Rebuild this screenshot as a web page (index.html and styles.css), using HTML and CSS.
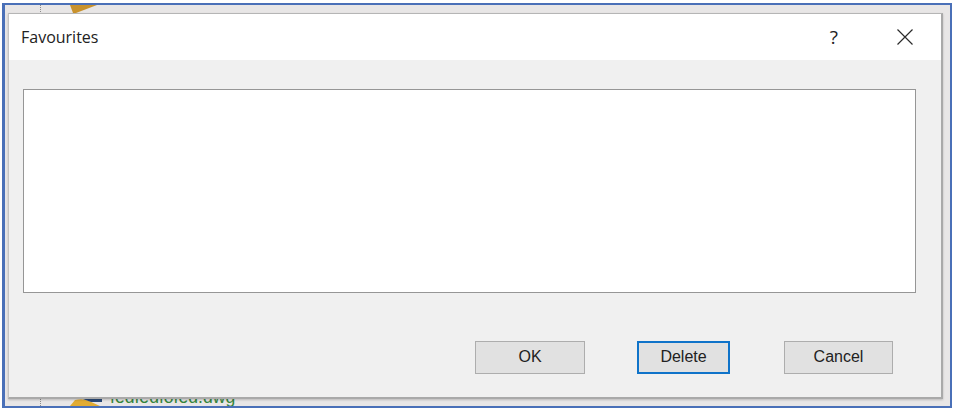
FILE: index.html
```html
<!DOCTYPE html>
<html lang="en">
<head>
<meta charset="utf-8">
<title>Favourites</title>
<link rel="stylesheet" href="styles.css">
</head>
<body>
<div class="frame">
  <div class="backdrop">
    <span class="tree-line"></span>
    <svg class="file-icon file-icon-top" viewBox="0 0 30 8" aria-hidden="true">
      <path d="M0 0 L27 0 L6 8 L3 8 Z" fill="#c9922c"/>
    </svg>
    <svg class="file-icon file-icon-bottom" viewBox="0 0 35 8" aria-hidden="true">
      <path d="M3 8 L8 2 Q16 0 22 3 L33 8 Z" fill="#e2ac33"/>
      <path d="M16 1 L35 0 L35 4 L24 4 Z" fill="#2b4a78"/>
    </svg>
    <span class="file-name">fedfedfofed.dwg</span>
  </div>
  <div class="dialog">
    <header class="titlebar">
      <span class="title">Favourites</span>
      <div class="title-actions">
        <span class="help">?</span>
        <svg class="close" viewBox="0 0 16 16" aria-hidden="true">
          <path d="M0.5 0.5 L15.5 15.5 M15.5 0.5 L0.5 15.5" stroke="#2b2b2b" stroke-width="1.2" fill="none"/>
        </svg>
      </div>
    </header>
    <div class="body">
      <div class="listbox"></div>
      <div class="buttons">
        <button class="btn btn-ok" type="button">OK</button>
        <button class="btn btn-delete" type="button">Delete</button>
        <button class="btn btn-cancel" type="button">Cancel</button>
      </div>
    </div>
  </div>
</div>
</body>
</html>
```

FILE: styles.css
```css
html, body {
  margin: 0;
  padding: 0;
  background: #ffffff;
}

body {
  width: 954px;
  height: 409px;
  overflow: hidden;
  font-family: "Liberation Sans", Arial, sans-serif;
}

.frame {
  position: relative;
  box-sizing: border-box;
  width: 950px;
  height: 405px;
  margin: 3px 0 0 2px;
  padding: 8px 7px 7px 3px;
  border-style: solid;
  border-color: #4a70b8;
  border-width: 2px 2px 2px 3px;
  background: #e8e6e6;
  overflow: hidden;
}

.backdrop {
  position: absolute;
  inset: 0;
}

.tree-line {
  position: absolute;
  left: 35px;
  top: 0;
  bottom: 0;
  border-left: 1px dotted #8a8a8a;
}

.file-icon {
  position: absolute;
  height: 8px;
}

.file-icon-top {
  left: 65px;
  top: 0;
  width: 30px;
}

.file-icon-bottom {
  left: 62px;
  bottom: 0;
  width: 35px;
}

.file-name {
  position: absolute;
  left: 105px;
  bottom: 0;
  font-size: 17.6px;
  line-height: 18px;
  color: #35853c;
}

.dialog {
  position: relative;
  display: flex;
  flex-direction: column;
  box-sizing: border-box;
  height: 100%;
  width: 935px;
  background: #f0f0f0;
  border-top: 1px solid #b5b5b5;
  border-left: 1px solid #c4c4c4;
  border-right: 2px solid #a9a9a9;
  border-bottom: 2px solid #a9a9a9;
  box-shadow: 0 1px 2px rgba(0, 0, 0, 0.2);
}

.titlebar {
  display: flex;
  align-items: center;
  justify-content: space-between;
  height: 46px;
  padding: 0 28px 0 12px;
  background: #ffffff;
}

.title {
  font-family: "Open Sans", "Liberation Sans", sans-serif;
  font-size: 16px;
  color: #222222;
}

.title-actions {
  display: flex;
  align-items: center;
  gap: 59px;
}

.help {
  font-family: "Open Sans", "Liberation Sans", sans-serif;
  font-size: 19px;
  color: #222222;
}

.close {
  display: block;
  width: 16px;
  height: 16px;
}

.body {
  display: flex;
  flex-direction: column;
  flex: 1;
  padding: 29px 25px 0 14px;
}

.listbox {
  box-sizing: border-box;
  height: 204px;
  background: #ffffff;
  border: 1px solid #969696;
}

.buttons {
  display: flex;
  justify-content: flex-end;
  margin-top: 48px;
  padding-right: 23px;
}

.btn {
  box-sizing: border-box;
  height: 33px;
  padding: 0 0 2px;
  font-family: "Liberation Sans", Arial, sans-serif;
  font-size: 16px;
  color: #222222;
  background: #e1e1e1;
  border: 1px solid #adadad;
}

.btn-ok {
  width: 110px;
}

.btn-delete {
  width: 93px;
  margin-left: 52px;
  border: 2px solid #0f73c9;
}

.btn-cancel {
  width: 109px;
  margin-left: 54px;
}
```
